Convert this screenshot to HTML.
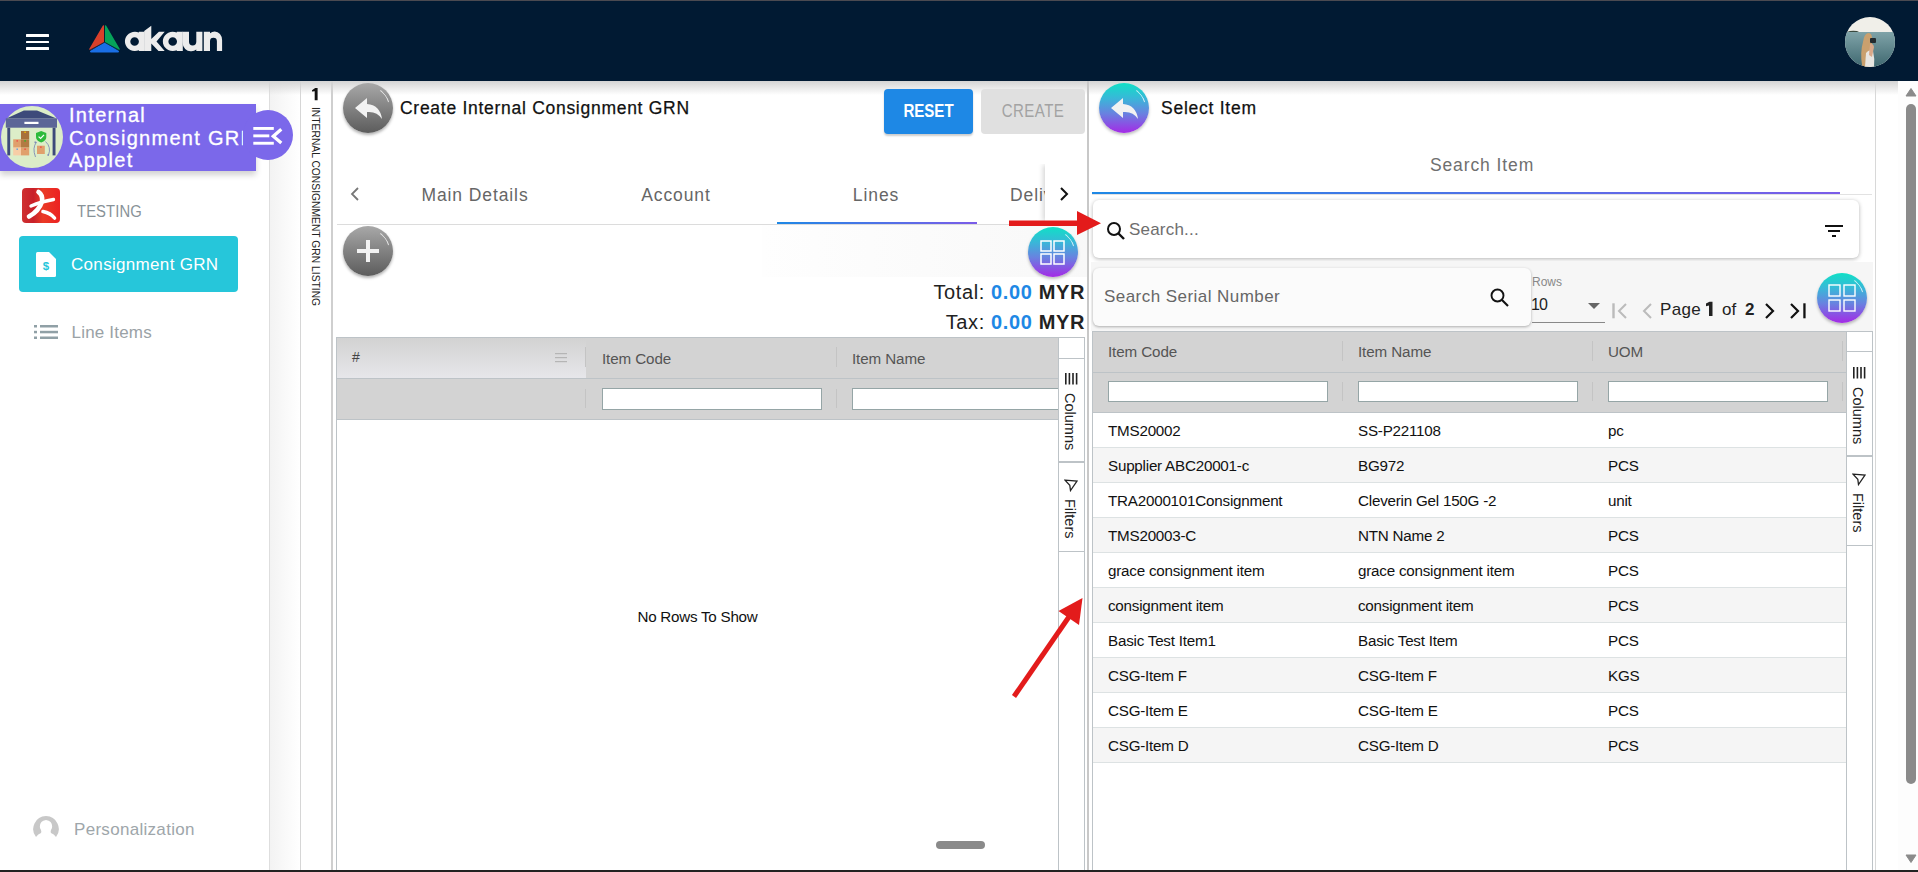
<!DOCTYPE html>
<html><head><meta charset="utf-8">
<style>
*{box-sizing:border-box;margin:0;padding:0}
html,body{width:1918px;height:872px;overflow:hidden;background:#fff;font-family:"Liberation Sans",sans-serif;position:relative}
.a{position:absolute}
#hdr{left:0;top:0;width:1918px;height:81px;background:#011a33;border-top:1px solid #4b4a51}
#shadow{left:0;top:81px;width:1918px;height:14px;background:linear-gradient(#d4d4d4,rgba(255,255,255,0));pointer-events:none}
.vline{width:1px;background:#dcdcdc}
.circ{border-radius:50%}
.gbtn{width:50px;height:50px;border-radius:50%;background:linear-gradient(#a8a8a8,#5c5c5c);box-shadow:0 2px 3px rgba(0,0,0,.3)}
.cbtn{width:50px;height:50px;border-radius:50%;background:linear-gradient(#10e0c6 0%,#38b8d8 30%,#6a80e0 62%,#a42ae6 100%);box-shadow:0 2px 3px rgba(0,0,0,.25)}
.t{white-space:nowrap}
.gbtn::after,.cbtn::after{content:"";position:absolute;left:3px;top:3px;right:3px;bottom:3px;border-radius:50%;border:1.3px solid transparent;border-top-color:rgba(255,255,255,.75);transform:rotate(52deg);clip-path:polygon(36% 0,68% 0,68% 30%,36% 30%)}
.sbt{font-size:14.5px;color:#222;transform-origin:0 0;transform:translate(16px,0) rotate(90deg)}
.row{left:1093px;width:753px;height:35px;border-bottom:1px solid #dde2e3}
.row span{position:absolute;top:8.5px;font-size:15.2px;letter-spacing:-.22px;color:#111;white-space:nowrap}
</style></head><body>
<!-- header -->
<div id="hdr" class="a">
  <div class="a" style="left:25.8px;top:32.9px;width:23.4px;height:3px;border-radius:.5px;background:#fff"></div>
  <div class="a" style="left:25.8px;top:39.5px;width:23.4px;height:2.8px;border-radius:.5px;background:#fff"></div>
  <div class="a" style="left:25.8px;top:46px;width:23.4px;height:2.9px;border-radius:.5px;background:#fff"></div>
  <svg class="a" style="left:88px;top:23px" width="34" height="32" viewBox="0 0 34 32" stroke-linejoin="round" stroke-width="2">
    <path d="M15.6 2.2 L2.2 25.2 L15.7 17.6 Z" fill="#d9402b" stroke="#d9402b"/>
    <path d="M17.4 2.2 L30.8 25.2 L17.3 17.6 Z" fill="#06a35a" stroke="#06a35a"/>
    <path d="M16.6 19.6 L3 27.6 L30 27.6 Z" fill="#1a6fe6" stroke="#1a6fe6"/>
    <path d="M16.5 0 V18.2" stroke="#011a33" stroke-width="0.9"/>
    <path d="M1 26.5 L16.5 18.2 L32 26.5" stroke="#011a33" stroke-width="0.7" fill="none"/>
  </svg>
  <svg class="a" style="left:0;top:-0.6px" width="240" height="60" viewBox="0 0 240 60">
<g fill="#ececec" fill-rule="evenodd">
<path d="M135 31.8 A10 9.6 0 1 0 138.9 50.2 V51 H144.7 V31.8 H138.9 V32.6 Q137 31.8 135 31.8 Z M134.6 37.2 A4.3 4.3 0 1 1 134.6 45.8 A4.3 4.3 0 1 1 134.6 37.2 Z"/>
<path d="M144.2 31 L151.3 25.7 V39 L158.9 31.8 H164.7 L156.5 41.5 L164.7 51 H158.5 L151.3 43.5 V51 H144.2 Z"/>
<path d="M172.6 31.8 A10 9.6 0 1 0 176.8 50.2 V51 H182.8 V31.8 H176.8 V32.6 Q174.8 31.8 172.6 31.8 Z M172.7 37.2 A4.3 4.3 0 1 1 172.7 45.8 A4.3 4.3 0 1 1 172.7 37.2 Z"/>
<path d="M182.5 31.8 H189 V41.8 A3.65 3.65 0 0 0 196.3 41.8 V31.8 H202.4 V51 H196.3 V49.6 Q194.3 51.3 191.5 51.3 A8.2 9.3 0 0 1 182.5 42 Z"/>
<path d="M203.8 51 V31.8 H210 V33.3 Q212 31.5 214.8 31.5 A7.3 8.6 0 0 1 222.1 40.2 V51 H216.9 V41.2 A3.45 3.45 0 0 0 210 41.2 V51 Z"/>
</g></svg>
  <svg class="a" style="left:1845px;top:16px" width="50" height="50" viewBox="0 0 50 50">
  <defs><clipPath id="cc"><circle cx="25" cy="25" r="25"/></clipPath>
  <linearGradient id="sea" x1="0" y1="0" x2="0" y2="1"><stop offset="0" stop-color="#7fa3a8"/><stop offset="1" stop-color="#3f6870"/></linearGradient></defs>
  <g clip-path="url(#cc)">
    <rect width="50" height="50" fill="#f0efe9"/>
    <rect y="15" width="50" height="35" fill="url(#sea)"/>
    <path d="M2 15 Q6 13 12 14 L14 15 Z" fill="#3a4a40"/>
    <path d="M17 48 Q15 35 18 25 Q19 17 23 16 Q27 16 27 21 L27 36 Q28 44 27 50 L17 50 Z" fill="#c9a06e"/>
    <path d="M20 50 L21 36 Q24 32 28 34 Q30 42 29 50 Z" fill="#e8e6e2"/>
    <rect x="25" y="21" width="6" height="5" rx="1" fill="#222a2e"/>
    <path d="M25 27 Q28 26 29 30 L27 40 L24 38 Z" fill="#d9a98a"/>
  </g>
</svg>
</div>

<!-- sidebar -->
<div class="a" style="left:269px;top:81px;width:1px;height:791px;background:#dedede"></div>
<div class="a" style="left:270px;top:81px;width:30px;height:791px;background:linear-gradient(90deg,#f3f3f3,#fff)"></div>
<div class="a" style="left:300px;top:81px;width:1px;height:791px;background:#d6d6d6"></div>
<div class="a" style="left:331px;top:81px;width:2px;height:791px;background:#cfcfcf"></div>
<div id="shadow" class="a"></div>
<div class="a" style="left:0;top:104px;width:256px;height:67px;background:#7b68ea;box-shadow:0 4px 6px rgba(0,0,0,.18)"></div>
<div class="a circ" style="left:243px;top:110px;width:50px;height:50px;background:#7b68ea"></div>
<div class="a circ" style="left:1px;top:106px;width:62px;height:62px;background:#dcedc8"></div>
<svg class="a" style="left:0;top:104px" width="64" height="67" viewBox="0 0 64 67">
  <path d="M6.3 14.4 L23.9 6.6 L37 6.6 L56.5 14.4 Z" fill="#3d4a7a"/>
  <rect x="5.8" y="14.4" width="51.2" height="9.3" fill="#5c6697"/>
  <rect x="24.4" y="17.8" width="14.1" height="2.2" fill="#fff"/>
  <rect x="7.3" y="23.7" width="2.9" height="27.7" fill="#3d4a7a"/>
  <rect x="52.6" y="23.7" width="2.9" height="27.7" fill="#3d4a7a"/>
  <rect x="13.2" y="35.3" width="7.8" height="8.3" fill="#e0a06c"/>
  <rect x="13.2" y="43.6" width="7.8" height="7.8" fill="#f7cda6"/>
  <rect x="21" y="27" width="8.2" height="8.3" fill="#a8713a"/>
  <rect x="21" y="35.3" width="8.2" height="8.3" fill="#b27b43"/>
  <rect x="21" y="43.6" width="8.2" height="7.8" fill="#e0a06c"/>
  <rect x="37" y="41.7" width="7.8" height="8.3" fill="#e0a06c"/>
  <rect x="16.5" y="36.2" width="1.4" height="1.4" fill="#e44"/>
  <rect x="16.5" y="44.5" width="1.4" height="1.4" fill="#49a0e8"/>
  <rect x="24.4" y="27.6" width="1.4" height="1.4" fill="#f5c400"/>
  <rect x="24.4" y="36.2" width="1.4" height="1.4" fill="#2b2"/>
  <rect x="24.4" y="44.5" width="1.4" height="1.4" fill="#e44"/>
  <rect x="40.2" y="42.4" width="1.4" height="1.4" fill="#e44"/>
  <path d="M36 29 L41.2 27 L46.3 29 L46.3 33 Q46.3 36.8 41.2 38.5 Q36 36.8 36 33 Z" fill="#2dbb3a"/>
  <path d="M38.6 32.6 L40.6 34.4 L44 30.8" stroke="#fff" stroke-width="1.2" fill="none"/>
  <path d="M36.5 38 Q32 44 35.5 53" stroke="#7d8bb5" stroke-width="0.9" fill="none"/>
  <path d="M45.5 37.5 Q51.5 43 48.5 51" stroke="#7d8bb5" stroke-width="0.9" fill="none"/>
  <rect x="47.4" y="50.2" width="1.6" height="1.6" fill="#7d8bb5"/>
  <rect x="34.5" y="37.5" width="1.6" height="1.6" fill="#7d8bb5"/>
</svg>
<div class="a" style="left:69px;top:104px;width:174px;height:70px;overflow:hidden;color:#fff;font-size:20px;line-height:22.6px;letter-spacing:1.3px;-webkit-text-stroke:.3px #fff">Internal<br><span class="t">Consignment GRN</span><br>Applet</div>
<svg class="a" style="left:252px;top:124px" width="32" height="24" viewBox="0 0 32 24">
  <rect x="1.3" y="3" width="20.5" height="2.9" fill="#fff"/>
  <rect x="1.3" y="10.4" width="16" height="2.9" fill="#fff"/>
  <rect x="1.3" y="17.8" width="20.5" height="2.9" fill="#fff"/>
  <path d="M29.3 5.3 L21.3 12.2 L29.3 19" stroke="#fff" stroke-width="3.3" fill="none"/>
</svg>
<!-- testing -->
<div class="a" style="left:22px;top:188px;width:38px;height:35px;border-radius:4px;background:linear-gradient(90deg,#cf3030,#c8202a 30%,#ea3a26 55%,#ec2222)"></div>
<svg class="a" style="left:0;top:180px" width="70" height="50" viewBox="0 180 70 50">
  <g fill="none" stroke="#fff" stroke-linecap="round">
    <path d="M38.5 192 Q43 195 42 201.5 Q39 211 29 216.5" stroke-width="4.6"/>
    <path d="M31 206 Q41 201.5 53.5 199.5" stroke-width="3.4"/>
    <path d="M43 211.5 Q50.5 213 54.5 218" stroke-width="3.6"/>
  </g>
</svg>
<div class="a t" style="left:77px;top:202.5px;font-size:16px;color:#889298;letter-spacing:.1px;transform:scaleX(.925);transform-origin:0 0">TESTING</div>
<div class="a" style="left:19px;top:236px;width:219px;height:56px;border-radius:4px;background:#26c6da"></div>
<svg class="a" style="left:35px;top:251px" width="22" height="27" viewBox="0 0 22 27">
  <path d="M1 2.5 Q1 1 2.5 1 L14 1 L21 8 L21 24.5 Q21 26 19.5 26 L2.5 26 Q1 26 1 24.5 Z" fill="#fff"/>
  <text x="11" y="19" font-size="11.5" font-weight="bold" fill="#26c6da" text-anchor="middle" font-family="Liberation Sans">$</text>
</svg>
<div class="a t" style="left:71px;top:254.5px;font-size:17px;color:#fff;letter-spacing:.32px">Consignment GRN</div>
<svg class="a" style="left:34px;top:324px" width="25" height="16" viewBox="0 0 25 16">
  <rect x="0" y="1" width="3" height="2.5" fill="#90a0a6"/><rect x="6" y="1" width="18" height="2.5" fill="#90a0a6"/>
  <rect x="0" y="6.8" width="3" height="2.5" fill="#90a0a6"/><rect x="6" y="6.8" width="18" height="2.5" fill="#90a0a6"/>
  <rect x="0" y="12.5" width="3" height="2.5" fill="#90a0a6"/><rect x="6" y="12.5" width="18" height="2.5" fill="#90a0a6"/>
</svg>
<div class="a t" style="left:71.5px;top:323px;font-size:17px;color:#9aa2a6;letter-spacing:.2px">Line Items</div>
<svg class="a" style="left:32px;top:815px" width="28" height="28" viewBox="0 0 28 28">
  <path d="M14 1 A13 13 0 0 0 4 22 Q6 19 9 18 Q10 16 8 13 Q7 6 14 5 Q21 6 20 13 Q18 16 19 18 Q22 19 24 22 A13 13 0 0 0 14 1 Z" fill="#c8c8c8"/>
</svg>
<div class="a t" style="left:74px;top:820px;font-size:17px;color:#9ea6aa;letter-spacing:.3px">Personalization</div>
<!-- vertical tab strip -->
<svg class="a" style="left:309.3px;top:86px" width="12" height="16" viewBox="0 0 12 16"><path d="M3 4.2 L6.2 2 H8.6 V14.2 H5.7 V5.2 L3 5.6 Z" fill="#111"/></svg>
<div class="a t" style="left:305px;top:107px;font-size:10.3px;color:#222;transform-origin:0 0;transform:translate(16px,0) rotate(90deg)">INTERNAL CONSIGNMENT GRN LISTING</div>

<!-- middle panel -->
<div class="a gbtn" style="left:343px;top:83px"></div>
<svg class="a" style="left:354px;top:96px" width="30" height="26" viewBox="0 0 30 26"><path d="M1 12 L13 2 L13 8 Q26 9 28 23 Q23 15 13 16 L13 22 Z" fill="#f2f2f2"/></svg>
<div class="a t" style="left:400px;top:98px;font-size:17.5px;color:#111;letter-spacing:.72px;-webkit-text-stroke:.25px #111">Create Internal Consignment GRN</div>
<div class="a" style="left:884px;top:89px;width:89px;height:45px;border-radius:4px;background:#1e88e5;box-shadow:0 2px 2px rgba(0,0,0,.2)"></div>
<div class="a t" style="left:884px;top:101px;width:89px;text-align:center;font-size:17.5px;font-weight:bold;color:#fff;transform:scaleX(.86)">RESET</div>
<div class="a" style="left:981px;top:89px;width:104px;height:45px;border-radius:4px;background:#e0e0e0"></div>
<div class="a t" style="left:981px;top:101px;width:104px;text-align:center;font-size:17.5px;color:#a3a3a3;letter-spacing:.5px;transform:scaleX(.86)">CREATE</div>
<!-- tabs -->
<svg class="a" style="left:349px;top:186px" width="12" height="16" viewBox="0 0 12 16"><path d="M9 2 L3 8 L9 14" stroke="#777" stroke-width="1.8" fill="none"/></svg>
<div class="a t" style="left:375px;top:185px;width:200px;text-align:center;font-size:17.5px;color:#666;letter-spacing:.9px">Main Details</div>
<div class="a t" style="left:576px;top:185px;width:200px;text-align:center;font-size:17.5px;color:#666;letter-spacing:.9px">Account</div>
<div class="a t" style="left:776px;top:185px;width:200px;text-align:center;font-size:17.5px;color:#666;letter-spacing:.9px">Lines</div>
<div class="a t" style="left:1010px;top:185px;font-size:17.5px;color:#666;letter-spacing:.9px">Delivery</div>
<div class="a" style="left:337px;top:224px;width:750px;height:1px;background:#dcdcdc"></div>
<div class="a" style="left:777px;top:222px;width:200px;height:2px;background:linear-gradient(90deg,#1e88e5,#7b5ce8)"></div>
<div class="a" style="left:1044.5px;top:164px;width:42.5px;height:58px;background:#fff;box-shadow:-3px 0 5px -1px rgba(0,0,0,.16);clip-path:inset(0 0 0 -12px)"></div>
<svg class="a" style="left:1057px;top:186px" width="14" height="16" viewBox="0 0 14 16"><path d="M4 2 L10 8 L4 14" stroke="#111" stroke-width="2" fill="none"/></svg>
<!-- toolbar -->
<div class="a" style="left:762px;top:225px;width:325px;height:52px;background:linear-gradient(90deg,#fefefe,#f8f8f8)"></div>
<div class="a gbtn" style="left:343px;top:226px"></div>
<svg class="a" style="left:356px;top:239px" width="24" height="24" viewBox="0 0 24 24"><rect x="10" y="1" width="4" height="22" fill="#f2f2f2"/><rect x="1" y="10" width="22" height="4" fill="#f2f2f2"/></svg>
<div class="a cbtn" style="left:1028px;top:227px"></div>
<svg class="a" style="left:1040px;top:240px" width="26" height="26" viewBox="0 0 26 26" fill="none" stroke="#fff" stroke-width="1.5"><rect x="1" y="1" width="10" height="10"/><rect x="14" y="1" width="10" height="10"/><rect x="1" y="14" width="10" height="10"/><rect x="14" y="14" width="10" height="10"/></svg>
<div class="a t" style="left:780px;top:281px;width:305px;text-align:right;font-size:20px;color:#222;letter-spacing:.62px">Total: <b style="color:#1e88e5">0.00</b> <b>MYR</b></div>
<div class="a t" style="left:780px;top:311px;width:305px;text-align:right;font-size:20px;color:#222;letter-spacing:.62px">Tax: <b style="color:#1e88e5">0.00</b> <b>MYR</b></div>
<!-- grid -->
<div class="a" style="left:336px;top:337px;width:1px;height:535px;background:#bdc3c7"></div>
<div class="a" style="left:337px;top:337px;width:721px;height:83px;background:#d3d3d3;border-top:1px solid #bdc3c7;border-bottom:1px solid #bdc3c7"></div>
<div class="a" style="left:337px;top:338px;width:249px;height:40px;background:linear-gradient(#d2d2d2,#e6e6ea)"></div>
<div class="a" style="left:337px;top:378px;width:721px;height:1px;background:#bdc3c7"></div>
<div class="a t" style="left:352px;top:349px;font-size:14px;color:#444">#</div>
<svg class="a" style="left:555px;top:352px" width="14" height="12" viewBox="0 0 14 12"><rect y="1" width="12" height="1.2" fill="#b5b5b5"/><rect y="5" width="12" height="1.2" fill="#b5b5b5"/><rect y="9" width="12" height="1.2" fill="#b5b5b5"/></svg>
<div class="a" style="left:585px;top:347px;width:1px;height:20px;background:#c4c4c4"></div>
<div class="a" style="left:585px;top:389px;width:1px;height:19px;background:#c4c4c4"></div>
<div class="a t" style="left:602px;top:349.5px;font-size:15.2px;letter-spacing:-.1px;color:#555">Item Code</div>
<div class="a" style="left:836px;top:347px;width:1px;height:20px;background:#c4c4c4"></div>
<div class="a" style="left:836px;top:389px;width:1px;height:19px;background:#c4c4c4"></div>
<div class="a t" style="left:852px;top:349.5px;font-size:15.2px;letter-spacing:-.1px;color:#555">Item Name</div>
<div class="a" style="left:602px;top:388px;width:220px;height:22px;background:#fff;border:1px solid #95a5a6"></div>
<div class="a" style="left:852px;top:388px;width:220px;height:22px;background:#fff;border:1px solid #95a5a6"></div>
<div class="a" style="left:1058px;top:337px;width:27px;height:535px;background:#fff;border-left:1px solid #bdc3c7;border-right:1px solid #bdc3c7;border-top:1px solid #bdc3c7"></div>
<div class="a" style="left:1058px;top:358px;width:27px;height:1px;background:#bdc3c7"></div>
<div class="a" style="left:1058px;top:461px;width:27px;height:2px;background:#bdc3c7"></div>
<div class="a" style="left:1058px;top:551px;width:27px;height:1px;background:#bdc3c7"></div>
<svg class="a" style="left:1064px;top:373px" width="14" height="12" viewBox="0 0 14 12"><rect x="1" y="0" width="1.6" height="11.5" fill="#222"/><rect x="4.6" y="0" width="1.6" height="11.5" fill="#222"/><rect x="8.2" y="0" width="1.6" height="11.5" fill="#222"/><rect x="11.8" y="0" width="1.6" height="11.5" fill="#222"/></svg>
<div class="a t sbt" style="left:1062px;top:393px">Columns</div>
<svg class="a" style="left:1064px;top:479px" width="14" height="13" viewBox="0 0 14 13"><path d="M1 1.2 L13 2 L6.5 11.5 L5.8 6.2 Z" stroke="#222" stroke-width="1.3" fill="none" stroke-linejoin="miter"/></svg>
<div class="a t sbt" style="left:1062px;top:499px">Filters</div>
<div class="a t" style="left:337px;top:607.5px;width:721px;text-align:center;font-size:15.2px;letter-spacing:-.25px;color:#111">No Rows To Show</div>
<div class="a" style="left:936px;top:841px;width:49px;height:8px;border-radius:4px;background:#8a8a8a"></div>

<!-- right panel -->
<div class="a" style="left:1087px;top:81px;width:2px;height:791px;background:#c8c8c8"></div>
<div class="a" style="left:1875px;top:81px;width:1px;height:791px;background:#d8d8d8"></div>
<div class="a cbtn" style="left:1099px;top:83px"></div>
<svg class="a" style="left:1110px;top:96px" width="30" height="26" viewBox="0 0 30 26"><path d="M1 12 L13 2 L13 8 Q26 9 28 23 Q23 15 13 16 L13 22 Z" fill="#f2f2f2"/></svg>
<div class="a t" style="left:1161px;top:98px;font-size:17.5px;color:#111;letter-spacing:.75px;-webkit-text-stroke:.25px #111">Select Item</div>
<div class="a t" style="left:1092px;top:155px;width:780px;text-align:center;font-size:17.5px;color:#6f6f6f;letter-spacing:.9px">Search Item</div>
<div class="a" style="left:1092px;top:194px;width:780px;height:1px;background:#e2e2e2"></div>
<div class="a" style="left:1092px;top:192px;width:748px;height:2px;background:linear-gradient(90deg,#1e88e5,#7b5ce8)"></div>
<div class="a" style="left:1093px;top:200px;width:766px;height:58px;border-radius:6px;background:#fff;box-shadow:0 1px 4px rgba(0,0,0,.3)"></div>
<svg class="a" style="left:1105px;top:220px" width="22" height="22" viewBox="0 0 22 22"><circle cx="9" cy="9" r="6" stroke="#111" stroke-width="2" fill="none"/><path d="M13.5 13.5 L19 19" stroke="#111" stroke-width="2.4"/></svg>
<div class="a t" style="left:1129px;top:220px;font-size:17px;color:#6e6e6e;letter-spacing:.2px">Search...</div>
<svg class="a" style="left:1824px;top:223px" width="20" height="16" viewBox="0 0 20 16"><rect x="1" y="2" width="18" height="2" fill="#111"/><rect x="4" y="7" width="12" height="2" fill="#111"/><rect x="8" y="12" width="4" height="2" fill="#111"/></svg>
<div class="a" style="left:1091px;top:262px;width:782px;height:69px;background:#f6f6f6"></div>
<div class="a" style="left:1093px;top:268px;width:438px;height:58px;border-radius:6px;background:#fbfbfb;box-shadow:0 1px 3px rgba(0,0,0,.3)"></div>
<div class="a t" style="left:1104px;top:287px;font-size:17px;color:#666;letter-spacing:.45px">Search Serial Number</div>
<svg class="a" style="left:1489px;top:287px" width="21" height="21" viewBox="0 0 21 21"><circle cx="8.5" cy="8.5" r="6" stroke="#111" stroke-width="1.9" fill="none"/><path d="M13 13 L19 19" stroke="#111" stroke-width="2.1"/></svg>
<div class="a t" style="left:1532px;top:275px;font-size:12px;color:#888">Rows</div>
<div class="a t" style="left:1531px;top:296px;font-size:16px;color:#222;letter-spacing:-1px">10</div>
<svg class="a" style="left:1587px;top:302px" width="14" height="8" viewBox="0 0 14 8"><path d="M1 1 L13 1 L7 7 Z" fill="#666"/></svg>
<div class="a" style="left:1532px;top:322px;width:73px;height:1px;background:#888"></div>
<svg class="a" style="left:1610px;top:302px" width="20" height="18" viewBox="0 0 20 18"><rect x="2.3" y="1.3" width="2.4" height="15" fill="#bbb"/><path d="M16 2 L9 9 L16 16" stroke="#bbb" stroke-width="2" fill="none"/></svg>
<svg class="a" style="left:1639px;top:302px" width="16" height="18" viewBox="0 0 16 18"><path d="M12 2 L5 9 L12 16" stroke="#bbb" stroke-width="2" fill="none"/></svg>
<div class="a t" style="left:1660px;top:300px;font-size:17px;color:#222;letter-spacing:.3px">Page</div><svg class="a" style="left:1700px;top:300px" width="16" height="18" viewBox="0 0 16 18"><path d="M6 3.6 L9.5 1.8 H12.5 V15.9 H9 V5.6 L6 6.2 Z" fill="#222"/></svg><div class="a t" style="left:1722px;top:300px;font-size:17px;color:#222">of</div><div class="a t" style="left:1745px;top:300px;font-size:17px;font-weight:bold;color:#222">2</div>
<svg class="a" style="left:1762px;top:302px" width="16" height="18" viewBox="0 0 16 18"><path d="M4 2 L11 9 L4 16" stroke="#111" stroke-width="2.2" fill="none"/></svg>
<svg class="a" style="left:1788px;top:302px" width="22" height="18" viewBox="0 0 22 18"><path d="M3 2 L10 9 L3 16" stroke="#111" stroke-width="2.2" fill="none"/><rect x="15.3" y="1.3" width="2.3" height="15" fill="#111"/></svg>
<div class="a cbtn" style="left:1817px;top:273px"></div>
<svg class="a" style="left:1826px;top:282px" width="32" height="32" viewBox="0 0 32 32" fill="none" stroke="#fff" stroke-width="1.4"><rect x="3" y="3" width="11" height="11"/><rect x="18" y="3" width="11" height="11"/><rect x="3" y="18" width="11" height="11"/><rect x="18" y="18" width="11" height="11"/></svg>
<!-- right grid -->
<div class="a" style="left:1092px;top:331px;width:1px;height:540px;background:#bdc3c7"></div>
<div class="a" style="left:1093px;top:331px;width:753px;height:82px;background:#d3d3d3;border-top:1px solid #bdc3c7;border-bottom:1px solid #bdc3c7"></div>
<div class="a" style="left:1093px;top:372px;width:753px;height:1px;background:#bdc3c7"></div>
<div class="a t" style="left:1108px;top:342.5px;font-size:15.2px;letter-spacing:-.1px;color:#555">Item Code</div>
<div class="a t" style="left:1358px;top:342.5px;font-size:15.2px;letter-spacing:-.1px;color:#555">Item Name</div>
<div class="a t" style="left:1608px;top:342.5px;font-size:15.2px;letter-spacing:-.1px;color:#555">UOM</div>
<div class="a" style="left:1342px;top:341px;width:1px;height:20px;background:#c4c4c4"></div>
<div class="a" style="left:1592px;top:341px;width:1px;height:20px;background:#c4c4c4"></div>
<div class="a" style="left:1842px;top:341px;width:1px;height:20px;background:#c4c4c4"></div>
<div class="a" style="left:1342px;top:382px;width:1px;height:19px;background:#c4c4c4"></div>
<div class="a" style="left:1592px;top:382px;width:1px;height:19px;background:#c4c4c4"></div>
<div class="a" style="left:1842px;top:382px;width:1px;height:19px;background:#c4c4c4"></div>
<div class="a" style="left:1108px;top:381px;width:220px;height:21px;background:#fff;border:1px solid #95a5a6"></div>
<div class="a" style="left:1358px;top:381px;width:220px;height:21px;background:#fff;border:1px solid #95a5a6"></div>
<div class="a" style="left:1608px;top:381px;width:220px;height:21px;background:#fff;border:1px solid #95a5a6"></div>
<div class="a row" style="top:413px;background:#fff"><span style="left:15px">TMS20002</span><span style="left:265px">SS-P221108</span><span style="left:515px">pc</span></div>
<div class="a row" style="top:448px;background:#f5f5f5"><span style="left:15px">Supplier ABC20001-c</span><span style="left:265px">BG972</span><span style="left:515px">PCS</span></div>
<div class="a row" style="top:483px;background:#fff"><span style="left:15px">TRA2000101Consignment</span><span style="left:265px">Cleverin Gel 150G -2</span><span style="left:515px">unit</span></div>
<div class="a row" style="top:518px;background:#f5f5f5"><span style="left:15px">TMS20003-C</span><span style="left:265px">NTN Name 2</span><span style="left:515px">PCS</span></div>
<div class="a row" style="top:553px;background:#fff"><span style="left:15px">grace consignment item</span><span style="left:265px">grace consignment item</span><span style="left:515px">PCS</span></div>
<div class="a row" style="top:588px;background:#f5f5f5"><span style="left:15px">consignment item</span><span style="left:265px">consignment item</span><span style="left:515px">PCS</span></div>
<div class="a row" style="top:623px;background:#fff"><span style="left:15px">Basic Test Item1</span><span style="left:265px">Basic Test Item</span><span style="left:515px">PCS</span></div>
<div class="a row" style="top:658px;background:#f5f5f5"><span style="left:15px">CSG-Item F</span><span style="left:265px">CSG-Item F</span><span style="left:515px">KGS</span></div>
<div class="a row" style="top:693px;background:#fff"><span style="left:15px">CSG-Item E</span><span style="left:265px">CSG-Item E</span><span style="left:515px">PCS</span></div>
<div class="a row" style="top:728px;background:#f5f5f5"><span style="left:15px">CSG-Item D</span><span style="left:265px">CSG-Item D</span><span style="left:515px">PCS</span></div>

<div class="a" style="left:1846px;top:331px;width:27px;height:540px;background:#fff;border-left:1px solid #bdc3c7;border-right:1px solid #bdc3c7;border-top:1px solid #bdc3c7"></div>
<div class="a" style="left:1846px;top:351px;width:27px;height:1px;background:#bdc3c7"></div>
<div class="a" style="left:1846px;top:455px;width:27px;height:2px;background:#bdc3c7"></div>
<div class="a" style="left:1846px;top:545px;width:27px;height:1px;background:#bdc3c7"></div>
<svg class="a" style="left:1852px;top:367px" width="14" height="12" viewBox="0 0 14 12"><rect x="1" y="0" width="1.6" height="11.5" fill="#222"/><rect x="4.6" y="0" width="1.6" height="11.5" fill="#222"/><rect x="8.2" y="0" width="1.6" height="11.5" fill="#222"/><rect x="11.8" y="0" width="1.6" height="11.5" fill="#222"/></svg>
<div class="a t sbt" style="left:1850px;top:387px">Columns</div>
<svg class="a" style="left:1852px;top:473px" width="14" height="13" viewBox="0 0 14 13"><path d="M1 1.2 L13 2 L6.5 11.5 L5.8 6.2 Z" stroke="#222" stroke-width="1.3" fill="none" stroke-linejoin="miter"/></svg>
<div class="a t sbt" style="left:1850px;top:493px">Filters</div>
<!-- scrollbar -->
<div class="a" style="left:1898px;top:81px;width:20px;height:789px;background:#fdfdfd"></div>
<svg class="a" style="left:1905px;top:87px" width="12" height="10" viewBox="0 0 12 10"><path d="M1 9 L6 1.5 L11 9 Z" fill="#8a8a8a" stroke="#8a8a8a" stroke-linejoin="round"/></svg>
<div class="a" style="left:1905.5px;top:104px;width:10.5px;height:680px;border-radius:5px;background:#8a8a8a"></div>
<svg class="a" style="left:1905px;top:854px" width="12" height="10" viewBox="0 0 12 10"><path d="M1 1 L6 8.5 L11 1 Z" fill="#8a8a8a" stroke="#8a8a8a" stroke-linejoin="round"/></svg>
<div class="a" style="left:0;top:870px;width:1918px;height:2px;background:#222"></div>

<!-- annotations -->
<svg class="a" style="left:0;top:0;z-index:50" width="1918" height="872" viewBox="0 0 1918 872">
  <path d="M1009 220.5 L1077 220.5 L1077 211 L1101 223.2 L1077 235 L1077 226 L1009 226 Z" fill="#e31b1b"/>
  <path d="M1014 696.5 L1073 611" stroke="#e31b1b" stroke-width="5" fill="none"/>
  <path d="M1082.5 598 L1058.5 611 L1079 625 Z" fill="#e31b1b"/>
</svg>
</body></html>
